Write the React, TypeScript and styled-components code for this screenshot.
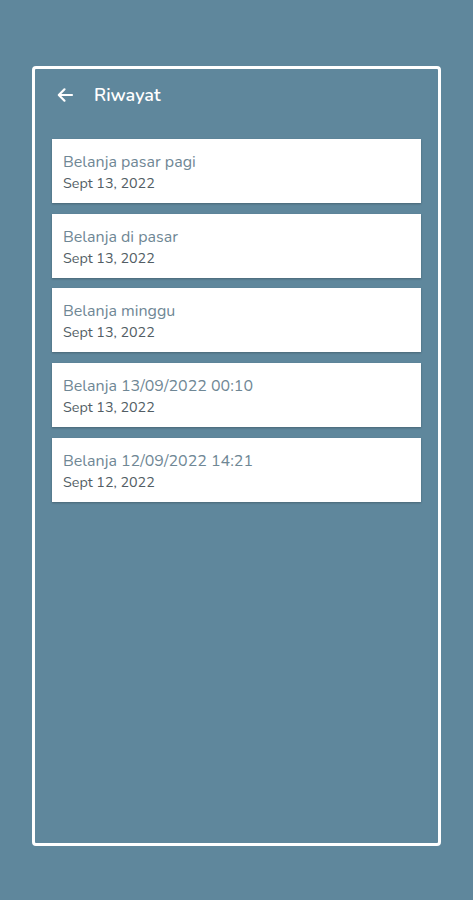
import styled, { createGlobalStyle } from "styled-components";

const GlobalStyle = createGlobalStyle`
  html, body {
    margin: 0;
    padding: 0;
    background: #5f879c;
    font-family: "Nunito", Lato, "Open Sans", sans-serif;
  }
`;

const Page = styled.div`
  width: 473px;
  height: 900px;
  box-sizing: border-box;
  padding: 66px 32px 54px 32px;
  background: #5f879c;
`;

const Frame = styled.div`
  height: 100%;
  box-sizing: border-box;
  border: 3px solid #ffffff;
  border-radius: 4px;
  padding: 0 17px;
  display: flex;
  flex-direction: column;
`;

const Header = styled.div`
  display: flex;
  align-items: center;
  height: 52px;
  padding-left: 4px;
  gap: 20px;
`;

const BackButton = styled.button`
  border: 0;
  background: none;
  padding: 0;
  width: 18px;
  height: 18px;
  display: flex;
  cursor: pointer;
`;

const Title = styled.h1`
  margin: 0;
  font-size: 18px;
  font-weight: 600;
  color: #ffffff;
`;

const List = styled.div`
  margin-top: 18px;
  display: flex;
  flex-direction: column;
  gap: 10.7px;
`;

const Card = styled.div`
  background: #ffffff;
  height: 64px;
  box-sizing: border-box;
  padding: 13px 11px 0;
  box-shadow: 0 1px 2px rgba(0, 0, 0, 0.25);
  display: flex;
  flex-direction: column;
  gap: 3px;
`;

const ItemName = styled.div`
  font-size: 16px;
  color: #6f8795;
  line-height: 20px;
`;

const ItemDate = styled.div`
  font-size: 14.3px;
  color: #525d64;
  line-height: 18px;
`;

const items = [
  { name: "Belanja pasar pagi", date: "Sept 13, 2022" },
  { name: "Belanja di pasar", date: "Sept 13, 2022" },
  { name: "Belanja minggu", date: "Sept 13, 2022" },
  { name: "Belanja 13/09/2022 00:10", date: "Sept 13, 2022" },
  { name: "Belanja 12/09/2022 14:21", date: "Sept 12, 2022" },
];

function App() {
  return (
    <Page>
      <GlobalStyle />
      <Frame>
        <Header>
          <BackButton aria-label="Kembali">
            <svg width="18" height="18" viewBox="0 0 18 18" fill="none">
              <path
                d="M16 9H3M8.5 3.3L2.8 9l5.7 5.7"
                stroke="#ffffff"
                strokeWidth="2.2"
                strokeLinecap="round"
                strokeLinejoin="round"
              />
            </svg>
          </BackButton>
          <Title>Riwayat</Title>
        </Header>
        <List>
          {items.map((item) => (
            <Card key={item.name}>
              <ItemName>{item.name}</ItemName>
              <ItemDate>{item.date}</ItemDate>
            </Card>
          ))}
        </List>
      </Frame>
    </Page>
  );
}

export default App;
